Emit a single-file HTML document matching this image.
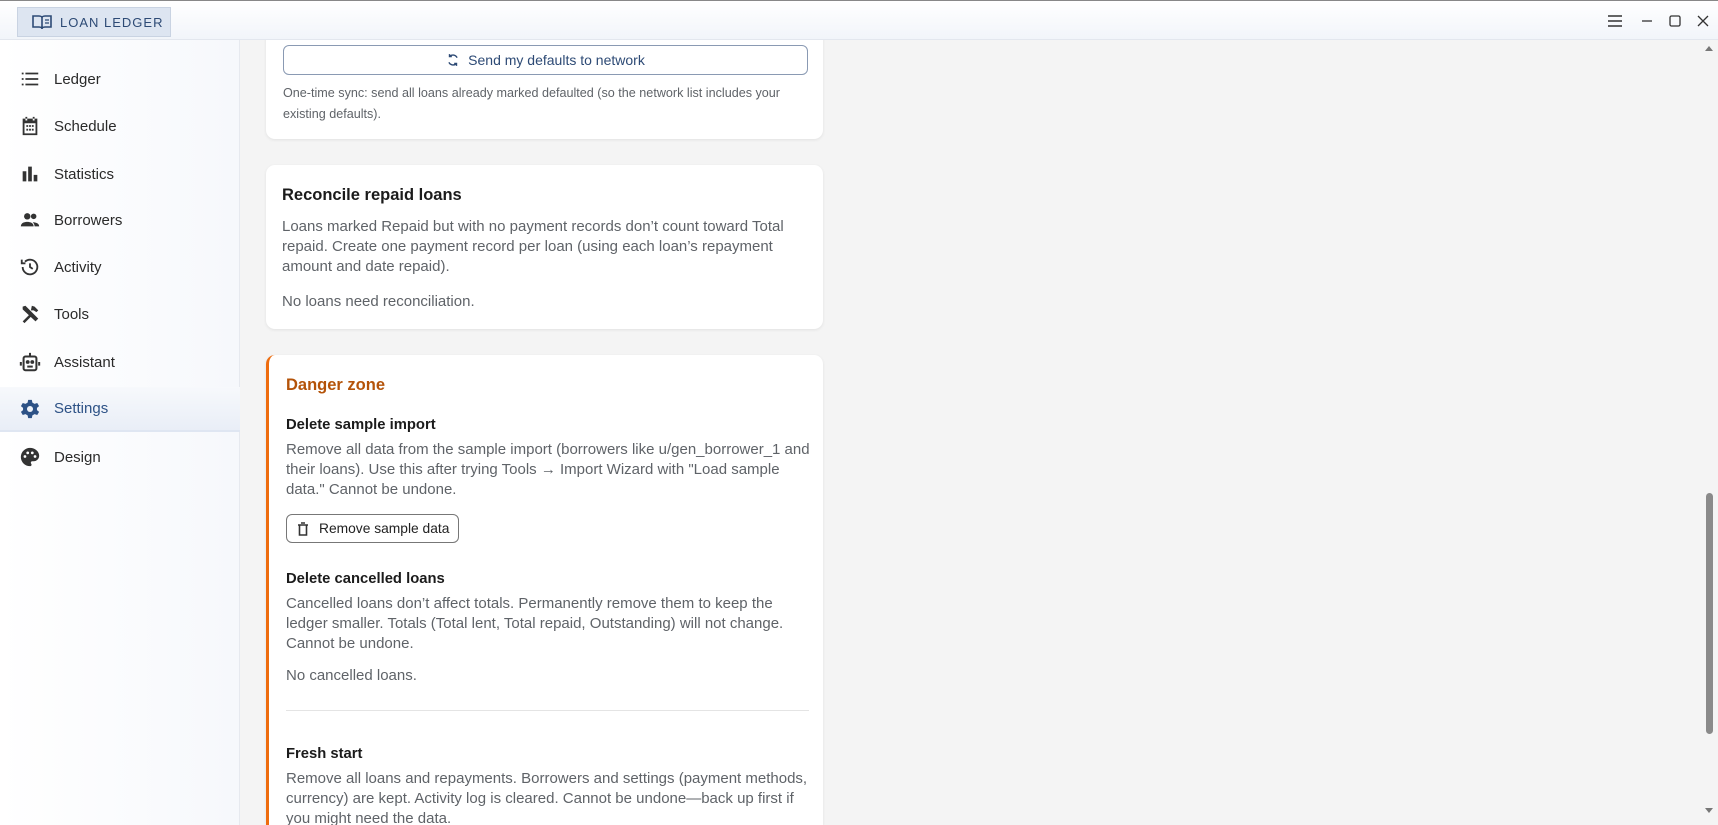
<!DOCTYPE html>
<html style="overflow:hidden"><head><meta charset="utf-8"><style>
*{box-sizing:border-box;margin:0;padding:0}
html,body{width:1718px;height:825px;overflow:hidden}
body{font-family:"Liberation Sans",sans-serif;background:#f4f4f4;position:relative;color:#1f2328}
.title{position:absolute;left:0;top:0;width:1718px;height:40px;background:linear-gradient(#fff,#f2f5fa);border-bottom:1px solid #e3e7ee;border-top:1px solid #888;z-index:5}
.tab{position:absolute;left:17px;top:6px;width:154px;height:30px;background:#dde5f1;border:1px solid #c9d3e2;display:flex;align-items:center;padding-left:14px;gap:8px;color:#2d4a75;font-size:13px;letter-spacing:1px;white-space:nowrap}
.side{position:absolute;left:0;top:40px;width:240px;height:785px;background:linear-gradient(90deg,#fff,#f6f8fc);border-right:1px solid #e6e9ef}
.item{position:absolute;left:0;width:240px;height:30px;display:flex;align-items:center;font-size:15px;color:#2a2a2a}
.item svg{position:absolute;left:19px;width:22px;height:22px}
.item span{position:absolute;left:54px}
.sel{background:linear-gradient(#f7f9fc,#e9eef7);border-bottom:2px solid #dfe6f2}
.card{position:absolute;left:266px;width:557px;background:#fff;border-radius:9px;box-shadow:0 1px 3px rgba(0,0,0,.08)}
.t{position:absolute;left:0;white-space:nowrap}
.p{font-size:15px;color:#5f6368;line-height:20px}
.h{font-size:16.5px;font-weight:bold;color:#1b1b1b}
.h2{font-size:14.8px;font-weight:bold;color:#1b1b1b}
</style></head><body>
<div class="title">
<div class="tab"><svg width="20" height="16" viewBox="0 0 20 16" fill="none" stroke="#2d4a75" stroke-width="1.6"><path d="M1 2h6c2 0 3 1 3 2v11c0-1-1-2-3-2H1zM19 2h-6c-2 0-3 1-3 2v11c0-1 1-2 3-2h6z"/><path d="M13 6h4M13 9h4" stroke-width="1.2"/></svg>LOAN LEDGER</div>
<svg style="position:absolute;left:1607px;top:14px" width="16" height="12"><path d="M1 1h14M1 6h14M1 11h14" stroke="#333" stroke-width="1.4"/></svg>
<svg style="position:absolute;left:1641px;top:14px" width="12" height="12"><path d="M1 6h10" stroke="#333" stroke-width="1.3"/></svg>
<svg style="position:absolute;left:1669px;top:14px" width="12" height="12"><rect x="1" y="1" width="10" height="10" rx="1.5" fill="none" stroke="#333" stroke-width="1.3"/></svg>
<svg style="position:absolute;left:1697px;top:14px" width="12" height="12"><path d="M1 1l10 10M11 1L1 11" stroke="#333" stroke-width="1.3"/></svg>
</div>
<div class="side">
<div class="item" style="top:24px"><svg viewBox="0 0 24 24" fill="#333"><path d="M3 5h2v2H3zM7 5h14v2H7zM3 11h2v2H3zM7 11h14v2H7zM3 17h2v2H3zM7 17h14v2H7z"/></svg><span>Ledger</span></div>
<div class="item" style="top:71px"><svg viewBox="0 0 24 24" fill="#333"><path d="M4 4h16v18H4z M6 9v11h12V9z M7 2h2v4H7zM15 2h2v4h-2z M8 11h2v2H8zM11 11h2v2h-2zM14 11h2v2h-2zM8 15h2v2H8zM11 15h2v2h-2zM14 15h2v2h-2z" fill-rule="evenodd"/></svg><span>Schedule</span></div>
<div class="item" style="top:119px"><svg viewBox="0 0 24 24" fill="#333"><path d="M4 9h4v11H4zM10 4h4v16h-4zM16 13h4v7h-4z"/></svg><span>Statistics</span></div>
<div class="item" style="top:165px"><svg viewBox="0 0 24 24" fill="#333"><circle cx="9" cy="8" r="3.5"/><circle cx="16" cy="8" r="3"/><path d="M2 19c0-4 4-5 7-5s7 1 7 5zM17 19c0-2-1-3.5-2-4.5 3 0 7 1 7 4.5z"/></svg><span>Borrowers</span></div>
<div class="item" style="top:212px"><svg viewBox="0 0 24 24" fill="none" stroke="#333" stroke-width="2"><path d="M4 12a8 8 0 1 0 2.5-5.8"/><path d="M3 4v4h4" /><path d="M12 8v4l3 2"/></svg><span>Activity</span></div>
<div class="item" style="top:259px"><svg viewBox="0 0 24 24" fill="#333"><path d="M4 20l9-9 2 2-9 9zM14 3l3 1 4 4-2 2-3-2-3 0z M4 4l3-1 14 14-3 3L4 7z"/></svg><span>Tools</span></div>
<div class="item" style="top:307px"><svg viewBox="0 0 24 24" fill="none" stroke="#333" stroke-width="2.2"><rect x="5" y="6" width="14" height="15" rx="2"/><path d="M12 2v4M2 12v4M22 12v4"/><circle cx="9.5" cy="12" r="1" fill="#333"/><circle cx="14.5" cy="12" r="1" fill="#333"/><path d="M9 17h6"/></svg><span>Assistant</span></div>
<div class="item sel" style="top:347px;height:45px"><svg viewBox="0 0 24 24" fill="#2d5286"><path d="M10 2h4l.6 3 2.4 1.4 2.9-1 2 3.4-2.3 2v2.4l2.3 2-2 3.4-2.9-1-2.4 1.4L14 22h-4l-.6-3-2.4-1.4-2.9 1-2-3.4 2.3-2v-2.4l-2.3-2 2-3.4 2.9 1L9.4 5z"/><circle cx="12" cy="12" r="3.3" fill="#eef2f8"/></svg><span style="color:#2d5286">Settings</span></div>
<div class="item" style="top:402px"><svg viewBox="0 0 24 24" fill="#333"><path d="M12 2C6.5 2 2 6.5 2 12s4.5 10 10 10c1 0 1.7-.7 1.7-1.6 0-.5-.2-.8-.4-1.1-.3-.3-.4-.6-.4-1.1 0-.9.7-1.6 1.6-1.6H16c3.3 0 6-2.7 6-6C22 5.9 17.5 2 12 2z"/><circle cx="6.5" cy="11.5" r="1.5" fill="#fff"/><circle cx="9.5" cy="7.5" r="1.5" fill="#fff"/><circle cx="14.5" cy="7.5" r="1.5" fill="#fff"/><circle cx="17.5" cy="11.5" r="1.5" fill="#fff"/></svg><span>Design</span></div>
</div>

<div class="card" style="top:20px;height:119px;border-radius:0 0 9px 9px">
<div style="position:absolute;left:17px;top:25px;width:525px;height:30px;border:1px solid #8a9ab3;border-radius:6px;display:flex;align-items:center;justify-content:center;gap:8px;color:#2d4a75;font-size:14px"><svg width="14" height="14" viewBox="0 0 24 24" fill="none" stroke="#2d4a75" stroke-width="2.4"><path d="M19 8a8 8 0 0 0-13-2M5 16a8 8 0 0 0 13 2"/><path d="M6 2v4h4M18 22v-4h-4"/></svg>Send my defaults to network</div>
<div class="t" style="left:17px;top:63px;font-size:12.6px;color:#5f6368;line-height:21px;white-space:normal;width:520px">One-time sync: send all loans already marked defaulted (so the network list includes your existing defaults).</div>
</div>

<div class="card" style="top:165px;height:164px">
<div class="t h" style="left:16px;top:21px">Reconcile repaid loans</div>
<div class="t p" style="left:16px;top:52px;white-space:normal;width:522px">Loans marked Repaid but with no payment records don’t count toward Total repaid. Create one payment record per loan (using each loan’s repayment amount and date repaid).</div>
<div class="t p" style="left:16px;top:127px">No loans need reconciliation.</div>
</div>

<div class="card" style="top:355px;height:470px;border-left:3px solid #ee6c0e;border-radius:9px 9px 0 0">
<div class="t" style="left:17px;top:21px;font-size:16.5px;font-weight:bold;color:#b45309">Danger zone</div>
<div class="t h2" style="left:17px;top:62px">Delete sample import</div>
<div class="t p" style="left:17px;top:85px;white-space:normal;width:532px">Remove all data from the sample import (borrowers like u/gen_borrower_1 and their loans). Use this after trying Tools → Import Wizard with "Load sample data." Cannot be undone.</div>
<div style="position:absolute;left:17px;top:159px;width:173px;height:29px;border:1px solid #777;border-radius:6px;display:flex;align-items:center;padding-left:10px;gap:10px;font-size:13.8px;color:#222"><svg width="12" height="14" viewBox="0 0 12 14" fill="none" stroke="#333" stroke-width="1.6"><path d="M1 3h10M4 1h4M2.5 3v10h7V3"/></svg>Remove sample data</div>
<div class="t h2" style="left:17px;top:216px">Delete cancelled loans</div>
<div class="t p" style="left:17px;top:239px;white-space:normal;width:512px">Cancelled loans don’t affect totals. Permanently remove them to keep the ledger smaller. Totals (Total lent, Total repaid, Outstanding) will not change. Cannot be undone.</div>
<div class="t p" style="left:17px;top:311px">No cancelled loans.</div>
<div style="position:absolute;left:17px;top:355px;width:523px;height:1px;background:#e4e4e4"></div>
<div class="t h2" style="left:17px;top:391px">Fresh start</div>
<div class="t p" style="left:17px;top:414px;white-space:normal;width:536px">Remove all loans and repayments. Borrowers and settings (payment methods, currency) are kept. Activity log is cleared. Cannot be undone—back up first if you might need the data.</div>
</div>

<div style="position:absolute;left:1702px;top:40px;width:16px;height:785px;background:#f4f4f4"></div>
<svg style="position:absolute;left:1705px;top:45px" width="8" height="6"><path d="M0 6L4 1 8 6z" fill="#777"/></svg>
<div style="position:absolute;left:1706px;top:493px;width:7px;height:241px;background:#8a8a8a;border-radius:4px"></div>
<svg style="position:absolute;left:1705px;top:808px" width="8" height="6"><path d="M0 0L4 5 8 0z" fill="#777"/></svg>
</body></html>
